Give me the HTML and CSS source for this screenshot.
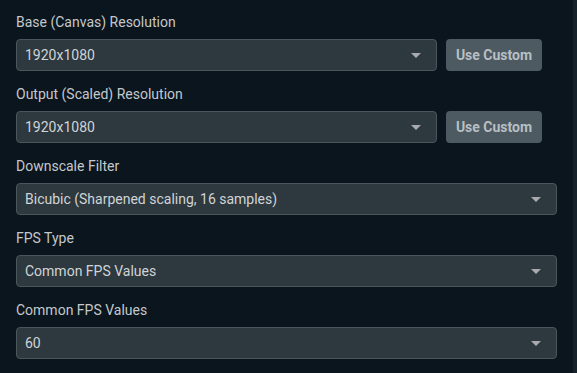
FILE: index.html
```html
<!DOCTYPE html>
<html>
<head>
<meta charset="utf-8">
<link rel="stylesheet" href="styles.css">
</head>
<body>
<div class="page">
  <div class="form">
    <div class="field">
      <label class="label">Base (Canvas) Resolution</label>
      <div class="row row-btn">
        <div class="select"><span>1920x1080</span><i class="caret"></i></div>
        <button class="btn">Use Custom</button>
      </div>
    </div>
    <div class="field">
      <label class="label">Output (Scaled) Resolution</label>
      <div class="row row-btn">
        <div class="select"><span>1920x1080</span><i class="caret"></i></div>
        <button class="btn">Use Custom</button>
      </div>
    </div>
    <div class="field">
      <label class="label">Downscale Filter</label>
      <div class="row">
        <div class="select"><span>Bicubic (Sharpened scaling, 16 samples)</span><i class="caret"></i></div>
      </div>
    </div>
    <div class="field">
      <label class="label">FPS Type</label>
      <div class="row">
        <div class="select"><span>Common FPS Values</span><i class="caret"></i></div>
      </div>
    </div>
    <div class="field">
      <label class="label">Common FPS Values</label>
      <div class="row">
        <div class="select"><span>60</span><i class="caret"></i></div>
      </div>
    </div>
  </div>
  <div class="scrollbar"></div>
</div>
</body>
</html>
```
FILE: styles.css
```css
html, body {
  margin: 0;
  padding: 0;
  background: #0a151d;
}
.page {
  display: flex;
  width: 577px;
  height: 373px;
  overflow: hidden;
  font-family: Roboto, "Liberation Sans", sans-serif;
}
.form {
  flex: 1;
  padding: 13px 16px 0 16px;
  display: flex;
  flex-direction: column;
  gap: 14px;
}
.scrollbar {
  width: 4px;
  background: #16222b;
}
.field {
  display: flex;
  flex-direction: column;
  gap: 8px;
}
.label {
  font-size: 14px;
  line-height: 18px;
  color: #c4c8cc;
}
.row {
  display: flex;
  gap: 9px;
}
.row-btn {
  margin-right: 15px;
}
.select {
  flex: 1;
  height: 32px;
  box-sizing: border-box;
  border: 1px solid #4a555c;
  border-radius: 4px;
  background: #2d383f;
  display: flex;
  align-items: center;
  justify-content: space-between;
  padding: 0 15px 0 8px;
  font-size: 14px;
  color: #d0d4d6;
}
.caret {
  width: 0;
  height: 0;
  border-left: 5px solid transparent;
  border-right: 5px solid transparent;
  border-top: 5px solid #a7abae;
}
.btn {
  width: 96px;
  height: 32px;
  border: none;
  border-radius: 4px;
  background: #4d5a61;
  color: #b7bfc3;
  font-family: Roboto, "Liberation Sans", sans-serif;
  font-weight: 700;
  font-size: 14px;
  padding: 0;
}
```
